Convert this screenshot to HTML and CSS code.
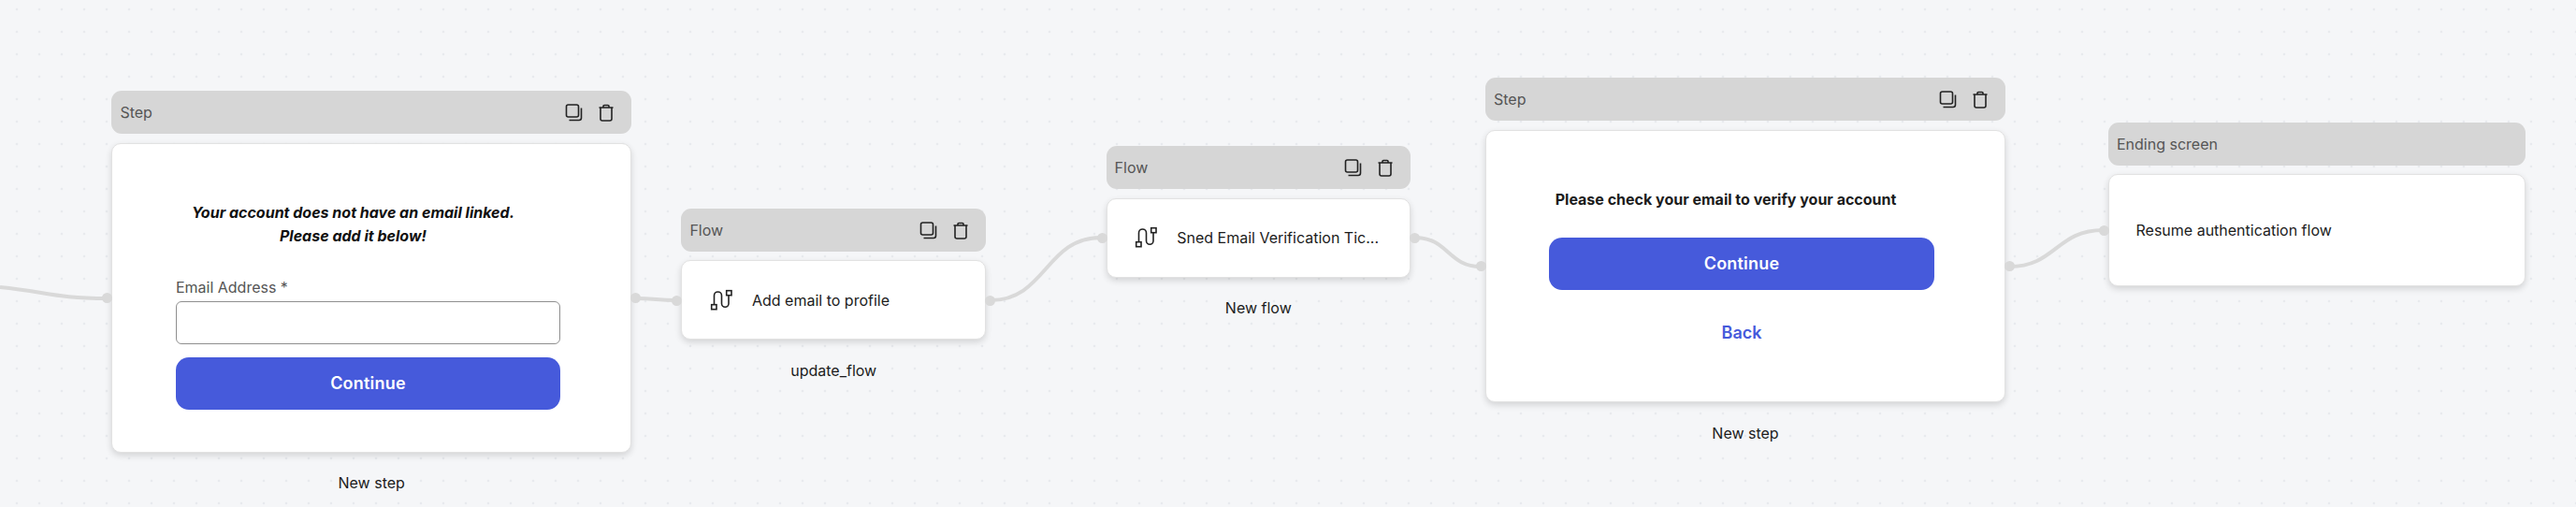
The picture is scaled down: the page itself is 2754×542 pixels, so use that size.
FILE: index.html
```html
<!DOCTYPE html>
<html lang="en">
<head>
<meta charset="utf-8">
<title>Flow canvas</title>
<link rel="stylesheet" href="styles.css">
</head>
<body>
<main class="canvas">
  <svg class="edges" width="2754" height="542" viewBox="0 0 2754 542">
    <path d="M0 307 C50 312 60 319 114 319"/>
    <path d="M680 319 C700 319 703 321 723 321"/>
    <path d="M1059 321 C1118 321 1118 254 1177 254"/>
    <path d="M1513 254 C1548 254 1548 285 1583 285"/>
    <path d="M2148 285 C2198 285 2198 246 2249 246"/>
  </svg>

  <section class="node node-a">
    <header class="bar"><span>Step</span>
      <span class="tools">
        <svg class="tool" viewBox="0 0 24 24"><rect x="3.5" y="4" width="13" height="13" rx="2"/><path d="M19.5 7.5V18a2.5 2.5 0 0 1-2.5 2.5H6.5"/></svg>
        <svg class="tool" viewBox="0 0 24 24"><path d="M4.5 7h15M9 7V5.5a1 1 0 0 1 1-1h4a1 1 0 0 1 1 1V7M6 7v12a2 2 0 0 0 2 2h8a2 2 0 0 0 2-2V7"/></svg>
      </span>
    </header>
    <div class="card card-a">
      <i class="handle handle-l"></i><i class="handle handle-r"></i>
      <h2 class="title-a">Your account does not have an email linked.<br>Please add it below!</h2>
      <label class="field-label" for="email">Email Address *</label>
      <input class="field" id="email" type="text">
      <button class="primary primary-a" type="button">Continue</button>
    </div>
    <p class="caption caption-a">New step</p>
  </section>

  <section class="node node-b">
    <header class="bar"><span>Flow</span>
      <span class="tools">
        <svg class="tool" viewBox="0 0 24 24"><rect x="3.5" y="4" width="13" height="13" rx="2"/><path d="M19.5 7.5V18a2.5 2.5 0 0 1-2.5 2.5H6.5"/></svg>
        <svg class="tool" viewBox="0 0 24 24"><path d="M4.5 7h15M9 7V5.5a1 1 0 0 1 1-1h4a1 1 0 0 1 1 1V7M6 7v12a2 2 0 0 0 2 2h8a2 2 0 0 0 2-2V7"/></svg>
      </span>
    </header>
    <div class="card card-flow">
      <i class="handle handle-l"></i><i class="handle handle-r"></i>
      <svg class="flow-icon" viewBox="0 0 24 24"><rect x="1.7" y="16.7" width="5.3" height="5"/><rect x="17.7" y="1.7" width="5.3" height="5"/><path d="M4.5 16.7V7a4 4 0 0 1 8 0v8.5a3.75 3.75 0 0 0 7.5 0V6.7"/></svg>
      <span class="flow-text">Add email to profile</span>
    </div>
    <p class="caption caption-b">update_flow</p>
  </section>

  <section class="node node-c">
    <header class="bar"><span>Flow</span>
      <span class="tools">
        <svg class="tool" viewBox="0 0 24 24"><rect x="3.5" y="4" width="13" height="13" rx="2"/><path d="M19.5 7.5V18a2.5 2.5 0 0 1-2.5 2.5H6.5"/></svg>
        <svg class="tool" viewBox="0 0 24 24"><path d="M4.5 7h15M9 7V5.5a1 1 0 0 1 1-1h4a1 1 0 0 1 1 1V7M6 7v12a2 2 0 0 0 2 2h8a2 2 0 0 0 2-2V7"/></svg>
      </span>
    </header>
    <div class="card card-flow">
      <i class="handle handle-l"></i><i class="handle handle-r"></i>
      <svg class="flow-icon" viewBox="0 0 24 24"><rect x="1.7" y="16.7" width="5.3" height="5"/><rect x="17.7" y="1.7" width="5.3" height="5"/><path d="M4.5 16.7V7a4 4 0 0 1 8 0v8.5a3.75 3.75 0 0 0 7.5 0V6.7"/></svg>
      <span class="flow-text">Sned Email Verification Tic...</span>
    </div>
    <p class="caption caption-c">New flow</p>
  </section>

  <section class="node node-d">
    <header class="bar"><span>Step</span>
      <span class="tools">
        <svg class="tool" viewBox="0 0 24 24"><rect x="3.5" y="4" width="13" height="13" rx="2"/><path d="M19.5 7.5V18a2.5 2.5 0 0 1-2.5 2.5H6.5"/></svg>
        <svg class="tool" viewBox="0 0 24 24"><path d="M4.5 7h15M9 7V5.5a1 1 0 0 1 1-1h4a1 1 0 0 1 1 1V7M6 7v12a2 2 0 0 0 2 2h8a2 2 0 0 0 2-2V7"/></svg>
      </span>
    </header>
    <div class="card card-d">
      <i class="handle handle-l"></i><i class="handle handle-r"></i>
      <h2 class="title-d">Please check your email to verify your account</h2>
      <button class="primary primary-d" type="button">Continue</button>
      <button class="back" type="button">Back</button>
    </div>
    <p class="caption caption-d">New step</p>
  </section>

  <section class="node node-e">
    <header class="bar"><span>Ending screen</span></header>
    <div class="card card-e">
      <i class="handle handle-l"></i>
      <span class="end-text">Resume authentication flow</span>
    </div>
  </section>
</main>
</body>
</html>
```
FILE: styles.css
```css
* { box-sizing: border-box; }
html, body { margin: 0; padding: 0; }
body { width: 2754px; height: 542px; overflow: hidden; font-family: Inter, "Liberation Sans", sans-serif; color: #1c1c1c; }

.canvas {
  position: relative;
  width: 2754px;
  height: 542px;
  background-color: #f5f6f8;
  background-image: radial-gradient(circle, #e8eaee 1.5px, transparent 1.6px);
  background-size: 24px 24px;
  background-position: 6px -2px;
}
.edges { position: absolute; left: 0; top: 0; }
.edges path { fill: none; stroke: #d9d9d9; stroke-width: 4; }

.node { position: absolute; display: flex; flex-direction: column; }
.node-a { left: 119.4px; top: 97.2px; width: 555.6px; }
.node-b { left: 728.4px; top: 222.8px; width: 325.6px; }
.node-c { left: 1182.6px; top: 156px; width: 325.4px; }
.node-d { left: 1588px; top: 83px; width: 556px; }
.node-e { left: 2254px; top: 130.7px; width: 446px; }

.bar {
  height: 46px;
  flex: none;
  display: flex;
  align-items: center;
  justify-content: space-between;
  padding: 0 15px 0 9px;
  border-radius: 11px;
  background: #d6d6d6;
  color: #555;
  font-size: 16px;
}
.tools { display: flex; gap: 10px; align-items: center; }
.tool { width: 24px; height: 24px; fill: none; stroke: #222; stroke-width: 1.6; }

.card {
  position: relative;
  margin-top: 9.5px;
  background: #fff;
  border: 1px solid #e2e2e2;
  border-radius: 10px;
  box-shadow: 0 3px 7px rgba(0, 0, 0, .14);
}
.handle { position: absolute; width: 11px; height: 11px; border-radius: 50%; background: #d9d9d9; top: 50%; margin-top: -5px; }
.handle-l { left: -11px; }
.handle-r { right: -11px; }

.card-a { height: 331.5px; padding: 61.5px 75px 0 67.5px; display: flex; flex-direction: column; align-items: stretch; }
.title-a { margin: 0 32px 0 0; font-size: 16px; line-height: 25px; font-weight: 700; font-style: italic; text-align: center; color: #111; }
.field-label { margin-top: 32px; font-size: 16px; line-height: 20px; color: #555; }
.field { height: 46px; margin-top: 5px; border: 1.5px solid #8f8f8f; border-radius: 6px; background: #fff; }
.primary { display: block; height: 56px; border: 0; border-radius: 14px; background: #465adb; color: #fff; letter-spacing: .2px; font: 600 18px/24px Inter, "Liberation Sans", sans-serif; }
.primary-a { margin-top: 14px; }

.card-d { height: 291.5px; padding: 61.5px 75px 0 67px; display: flex; flex-direction: column; }
.title-d { margin: 0 0 0 6.7px; font-size: 16px; line-height: 24px; font-weight: 700; color: #1c1c1c; white-space: nowrap; }
.primary-d { margin-top: 29px; }
.back { margin-top: 34px; height: 24px; padding: 0; border: 0; background: none; color: #465adb; font: 600 18px/24px Inter, "Liberation Sans", sans-serif; }

.card-flow { height: 85px; padding-left: 29.6px; display: flex; align-items: center; gap: 21px; }
.flow-icon { width: 24px; height: 24px; flex: none; fill: none; stroke: #222; stroke-width: 1.6; }
.flow-text { font-size: 16px; white-space: nowrap; }

.card-e { height: 119.5px; padding-left: 28.5px; display: flex; align-items: center; }
.end-text { font-size: 16px; }

.caption { margin: 0; text-align: center; font-size: 16px; line-height: 20px; color: #1c1c1c; }
.caption-a { margin-top: 22px; }
.caption-b { margin-top: 22.7px; }
.caption-c { margin-top: 22px; }
.caption-d { margin-top: 22.5px; }
```
